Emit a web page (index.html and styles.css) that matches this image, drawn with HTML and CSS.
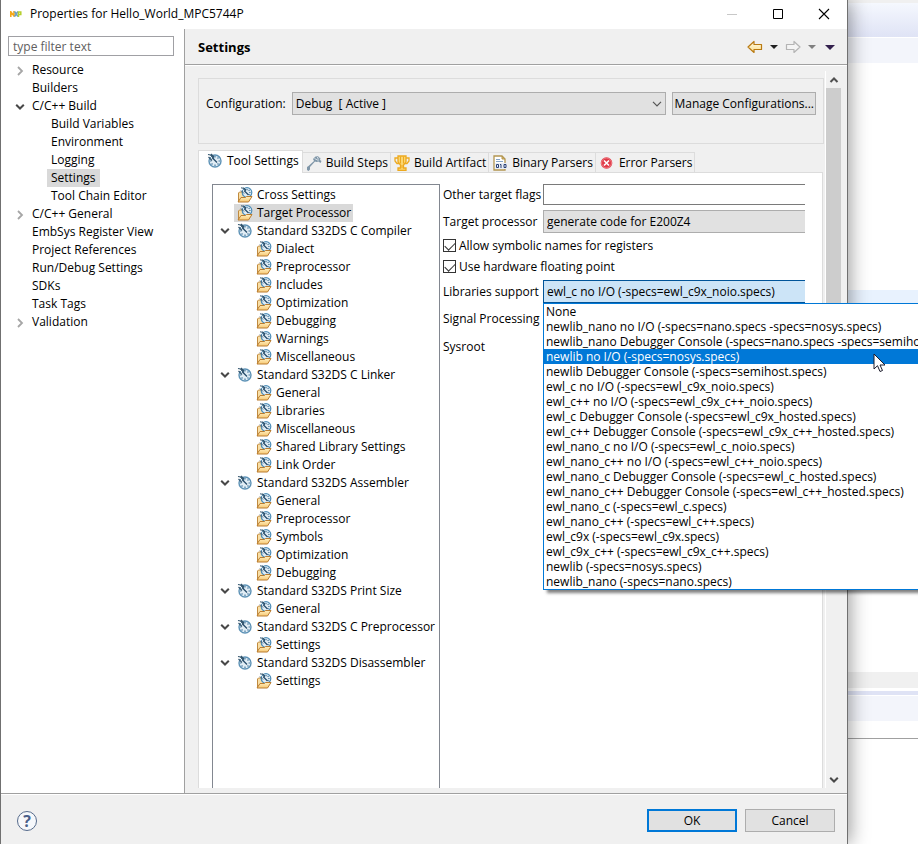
FILE: index.html
```html
<!DOCTYPE html>
<html lang="en">
<head>
<meta charset="utf-8">
<title>Properties for Hello_World_MPC5744P</title>
<link rel="stylesheet" href="styles.css">
</head>
<body>
<svg class="defs" aria-hidden="true">
  <defs>
    <linearGradient id="folder-fill" x1="0" y1="0" x2="0" y2="1">
      <stop offset="0" stop-color="#fff0c0"/><stop offset="1" stop-color="#f8c873"/>
    </linearGradient>
    <linearGradient id="arrow-fill" x1="0" y1="0" x2="0" y2="1">
      <stop offset="0" stop-color="#fffbe6"/><stop offset="1" stop-color="#fbdf8c"/>
    </linearGradient>
    <symbol id="dial" viewBox="0 0 16 16">
      <circle cx="8" cy="8" r="6" fill="#e1edf5" stroke="#5d92b6" stroke-width="1.400"/>
      <path d="M8 3v1.500M8 11.500V13M3 8h1.500M11.500 8H13M4.500 11.500l1-1M11.500 11.500l-1-1M11.500 4.500l-1 1" stroke="#4b7da2" stroke-width="1.200"/>
      <path d="M1 1.500l2.500.5L7 5.500M1.500 4l3.500 3.500M4 1l3 3" fill="none" stroke="#34566f" stroke-width="1.100"/>
      <path d="M3 3l6.500 6.500" stroke="#fff" stroke-width="1"/>
      <path d="M5 4.500l5 5" stroke="#234a69" stroke-width="1.200"/>
    </symbol>
    <symbol id="folder" viewBox="0 0 16 16">
      <path d="M1.500 14.500V6l1-1h3l1 1.500h6v5z" fill="#f9dfa6" stroke="#c08a3e"/>
      <circle cx="10" cy="5.500" r="4.800" fill="#e1edf5" stroke="#4d8db8" stroke-width="1.200"/>
      <path d="M10 2v1.200M13.500 5.500h-1.200M12.500 3l-.8.800M12.500 8l-.8-.8" stroke="#34688f" stroke-width="1.100"/>
      <path d="M4 .8l2 .4L9 4M4 3.500L7 6.500M6.500.5L9 3" fill="none" stroke="#34566f"/>
      <path d="M5.500 2.500l6 6" stroke="#fff" stroke-width=".9"/>
      <path d="M7 3.500l4.500 4.500" stroke="#234a69" stroke-width="1.200"/>
      <path d="M1 15l3-4.500h4.500l1-1H15L11.500 15z" fill="url(#folder-fill)" stroke="#b97c30" stroke-linejoin="round"/>
    </symbol>
    <symbol id="down" viewBox="0 0 10 8">
      <path d="M1.200 1.700L5 5.500l3.800-3.800" fill="none" stroke="#484848" stroke-width="2"/>
    </symbol>
    <symbol id="right" viewBox="0 0 10 10">
      <path d="M3 1l4 4-4 4" fill="none" stroke="#a6a6a6" stroke-width="1.800"/>
    </symbol>
    <symbol id="triangle" viewBox="0 0 8 4"><path d="M0 0h8L4 4z" fill="currentColor"/></symbol>
  </defs>
</svg>

<div class="desktop">
  <main class="dialog">
    <header class="titlebar">
      <svg class="brand" viewBox="0 0 12 6" aria-hidden="true">
        <path d="M.8 6V.8L4 5V0" fill="none" stroke="#f6a91b" stroke-width="1.600"/>
        <path d="M4.500.5l3.500 5M8 .5l-3.500 5" stroke="#6c9fc4" stroke-width="1.600"/>
        <path d="M8.500 6V1h2.300v2.400H8.800" fill="none" stroke="#b6cf2e" stroke-width="1.500"/>
      </svg>
      <h1>Properties for Hello_World_MPC5744P</h1>
      <div class="window-buttons">
        <button aria-label="Minimize"><svg viewBox="0 0 12 12"><path d="M1 6.500h10" stroke="#c8c8c8"/></svg></button>
        <button aria-label="Maximize"><svg viewBox="0 0 12 12"><path d="M1.500 1.500h9v9h-9z" fill="none" stroke="#000"/></svg></button>
        <button aria-label="Close"><svg viewBox="0 0 12 12"><path d="M1 1l10 10M11 1L1 11" stroke="#000" stroke-width="1.100"/></svg></button>
      </div>
    </header>

    <div class="panes">
      <nav class="sidebar" aria-label="Property pages">
        <input class="filter" type="text" placeholder="type filter text" aria-label="Filter">
        <ul class="nav-tree">
          <li><svg class="twist"><use href="#right"/></svg><span>Resource</span></li>
          <li><span>Builders</span></li>
          <li><svg class="twist open"><use href="#down"/></svg><span>C/C++ Build</span></li>
          <li class="child"><span>Build Variables</span></li>
          <li class="child"><span>Environment</span></li>
          <li class="child"><span>Logging</span></li>
          <li class="child"><span class="selected">Settings</span></li>
          <li class="child"><span>Tool Chain Editor</span></li>
          <li><svg class="twist"><use href="#right"/></svg><span>C/C++ General</span></li>
          <li><span>EmbSys Register View</span></li>
          <li><span>Project References</span></li>
          <li><span>Run/Debug Settings</span></li>
          <li><span>SDKs</span></li>
          <li><span>Task Tags</span></li>
          <li><svg class="twist"><use href="#right"/></svg><span>Validation</span></li>
        </ul>
      </nav>

      <section class="page">
        <header class="page-head">
          <h2>Settings</h2>
          <div class="history">
            <button aria-label="Back"><svg class="arrow" viewBox="0 0 16 14"><path d="M1 7l6-5.500V4.500h7.500v5H7v3z" fill="url(#arrow-fill)" stroke="#b97a12" stroke-width="1.200" stroke-linejoin="round"/></svg></button>
            <button aria-label="Back history"><svg class="tri"><use href="#triangle"/></svg></button>
            <button aria-label="Forward"><svg class="arrow" viewBox="0 0 16 14"><path d="M15 7L9 1.500V4.500H1.500v5H9v3z" fill="#f4f4f4" stroke="#b4b4b4" stroke-width="1.200" stroke-linejoin="round"/></svg></button>
            <button aria-label="Forward history"><svg class="tri dim"><use href="#triangle"/></svg></button>
            <button aria-label="Menu"><svg class="tri menu"><use href="#triangle"/></svg></button>
          </div>
        </header>

        <div class="scroll-area">
          <div class="content">
            <div class="config">
              <label for="config">Configuration:</label>
              <div class="combo">
                <select id="config"><option>Debug&nbsp; [ Active ]</option></select>
                <svg viewBox="0 0 10 6" aria-hidden="true"><path d="M1 .8l4 4 4-4" fill="none" stroke="#555" stroke-width="1.200"/></svg>
              </div>
              <button class="btn">Manage Configurations...</button>
            </div>

            <div class="tabs" role="tablist">
              <button class="tab active" role="tab" aria-selected="true"><svg><use href="#dial"/></svg>Tool Settings</button>
              <button class="tab" role="tab"><svg viewBox="0 0 16 16"><path d="M1 12l1.500-1L8 6 7 4l2.500-2.500L12 1l1 1.500 1.500.5-.5 2 1.500 1-1 2-2-1.500-2 .5-1.500-.5L4 12v2.500L2.500 16 1 15z" fill="#7f96a8"/><path d="M8.500 3.500l4 2M11 1.500l1.500 3" stroke="#d3dce3"/></svg>Build Steps</button>
              <button class="tab" role="tab"><svg viewBox="0 0 16 16"><path d="M4 3H1v3l2 2.500h2M12 3h3v3l-2 2.500h-2" fill="none" stroke="#eda91f" stroke-width="1.300"/><path d="M4 1h8v6l-2.500 3v3H12v2.300H4V13h2.500v-3L4 7z" fill="#fbd671" stroke="#eda91f" stroke-width="1.300"/><path d="M6.500 1.500v7M9.500 1.500v7M8 10v3" stroke="#eda91f"/></svg>Build Artifact</button>
              <button class="tab" role="tab"><svg viewBox="0 0 16 16"><path d="M2 1h8l3 3v11H2z" fill="#fff" stroke="#b29550" stroke-width="1.300"/><path d="M10 1v3h3z" fill="#d8b45b" stroke="#b29550"/><path d="M4 4.500h4M4 6.500h7" stroke="#86a5c6"/><path d="M3 8h12v6H3z" fill="#e9eef6"/><path d="M4.500 9.500h2v3h-2zM8 9.500h1v3.500M12 9.500h2v3h-2z" fill="none" stroke="#283f73"/></svg>Binary Parsers</button>
              <button class="tab" role="tab"><svg viewBox="0 0 16 16"><circle cx="7.500" cy="8" r="5.800" fill="#e03a48"/><circle cx="7.500" cy="8" r="5" fill="none" stroke="#f08a90" stroke-width=".8"/><path d="M5 5.500l5 5M10 5.500l-5 5" stroke="#fff" stroke-width="1.600"/></svg>Error Parsers</button>
            </div>

            <div class="tab-panel" role="tabpanel">
              <ul class="tool-tree">
                <li><svg><use href="#folder"/></svg>Cross Settings</li>
                <li><span class="selected"><svg><use href="#folder"/></svg>Target Processor</span></li>
                <li><svg class="twist"><use href="#down"/></svg><svg><use href="#dial"/></svg>Standard S32DS C Compiler</li>
                <li class="child"><svg><use href="#folder"/></svg>Dialect</li>
                <li class="child"><svg><use href="#folder"/></svg>Preprocessor</li>
                <li class="child"><svg><use href="#folder"/></svg>Includes</li>
                <li class="child"><svg><use href="#folder"/></svg>Optimization</li>
                <li class="child"><svg><use href="#folder"/></svg>Debugging</li>
                <li class="child"><svg><use href="#folder"/></svg>Warnings</li>
                <li class="child"><svg><use href="#folder"/></svg>Miscellaneous</li>
                <li><svg class="twist"><use href="#down"/></svg><svg><use href="#dial"/></svg>Standard S32DS C Linker</li>
                <li class="child"><svg><use href="#folder"/></svg>General</li>
                <li class="child"><svg><use href="#folder"/></svg>Libraries</li>
                <li class="child"><svg><use href="#folder"/></svg>Miscellaneous</li>
                <li class="child"><svg><use href="#folder"/></svg>Shared Library Settings</li>
                <li class="child"><svg><use href="#folder"/></svg>Link Order</li>
                <li><svg class="twist"><use href="#down"/></svg><svg><use href="#dial"/></svg>Standard S32DS Assembler</li>
                <li class="child"><svg><use href="#folder"/></svg>General</li>
                <li class="child"><svg><use href="#folder"/></svg>Preprocessor</li>
                <li class="child"><svg><use href="#folder"/></svg>Symbols</li>
                <li class="child"><svg><use href="#folder"/></svg>Optimization</li>
                <li class="child"><svg><use href="#folder"/></svg>Debugging</li>
                <li><svg class="twist"><use href="#down"/></svg><svg><use href="#dial"/></svg>Standard S32DS Print Size</li>
                <li class="child"><svg><use href="#folder"/></svg>General</li>
                <li><svg class="twist"><use href="#down"/></svg><svg><use href="#dial"/></svg>Standard S32DS C Preprocessor</li>
                <li class="child"><svg><use href="#folder"/></svg>Settings</li>
                <li><svg class="twist"><use href="#down"/></svg><svg><use href="#dial"/></svg>Standard S32DS Disassembler</li>
                <li class="child"><svg><use href="#folder"/></svg>Settings</li>
              </ul>

              <form class="options">
                <label for="flags">Other target flags</label>
                <input id="flags" class="field" type="text">
                <label for="cpu">Target processor</label>
                <select id="cpu" class="field"><option>generate code for E200Z4</option></select>
                <label class="check"><input type="checkbox" checked>Allow symbolic names for registers</label>
                <label class="check"><input type="checkbox" checked>Use hardware floating point</label>
                <label for="libs">Libraries support</label>
                <div class="dropdown">
                  <select id="libs" class="field focused"><option>ewl_c no I/O (-specs=ewl_c9x_noio.specs)</option></select>
                  <ul class="popup" role="listbox" aria-label="Libraries support">
                    <li role="option">None</li>
                    <li role="option">newlib_nano no I/O (-specs=nano.specs -specs=nosys.specs)</li>
                    <li role="option">newlib_nano Debugger Console (-specs=nano.specs -specs=semihost.specs)</li>
                    <li role="option" aria-selected="true" class="hover">newlib no I/O (-specs=nosys.specs)
                      <svg class="pointer" viewBox="0 0 13 20" aria-hidden="true"><path d="M1 1v15l3.500-3.300L7 18.500l2.500-1L7 12h5z" fill="#fff" stroke="#1c1c2c"/></svg></li>
                    <li role="option">newlib Debugger Console (-specs=semihost.specs)</li>
                    <li role="option">ewl_c no I/O (-specs=ewl_c9x_noio.specs)</li>
                    <li role="option">ewl_c++ no I/O (-specs=ewl_c9x_c++_noio.specs)</li>
                    <li role="option">ewl_c Debugger Console (-specs=ewl_c9x_hosted.specs)</li>
                    <li role="option">ewl_c++ Debugger Console (-specs=ewl_c9x_c++_hosted.specs)</li>
                    <li role="option">ewl_nano_c no I/O (-specs=ewl_c_noio.specs)</li>
                    <li role="option">ewl_nano_c++ no I/O (-specs=ewl_c++_noio.specs)</li>
                    <li role="option">ewl_nano_c Debugger Console (-specs=ewl_c_hosted.specs)</li>
                    <li role="option">ewl_nano_c++ Debugger Console (-specs=ewl_c++_hosted.specs)</li>
                    <li role="option">ewl_nano_c (-specs=ewl_c.specs)</li>
                    <li role="option">ewl_nano_c++ (-specs=ewl_c++.specs)</li>
                    <li role="option">ewl_c9x (-specs=ewl_c9x.specs)</li>
                    <li role="option">ewl_c9x_c++ (-specs=ewl_c9x_c++.specs)</li>
                    <li role="option">newlib (-specs=nosys.specs)</li>
                    <li role="option">newlib_nano (-specs=nano.specs)</li>
                  </ul>
                </div>
                <span>Signal Processing</span><span></span>
                <span>Sysroot</span><span></span>
              </form>
            </div>
          </div>

          <div class="scrollbar" aria-hidden="true">
            <svg viewBox="0 0 10 8"><path d="M1.500 6L5 2.500 8.500 6" fill="none" stroke="#505050" stroke-width="2"/></svg>
            <div class="track"><div class="thumb"></div></div>
            <svg><use href="#down"/></svg>
          </div>
        </div>
      </section>
    </div>

    <footer class="actions">
      <button class="help" aria-label="Help">?</button>
      <button class="btn primary">OK</button>
      <button class="btn">Cancel</button>
    </footer>
  </main>

  <aside class="backdrop" aria-hidden="true">
    <div class="bar"></div>
    <div class="strip"></div>
    <div class="editor"><div class="line"></div></div>
    <div class="sash"></div>
    <div class="bar slim"></div>
    <div class="strip"></div>
    <div class="view"></div>
  </aside>
</div>
</body>
</html>
```
FILE: styles.css
```css
* { box-sizing: border-box; }

body {
  margin: 0;
  background: #fff;
  color: #000;
  font: 12px/18px "Open Sans", "Noto Sans", sans-serif;
}

button, input, select { font: inherit; color: inherit; }
button { padding: 0; border: 0; background: none; }
ul { margin: 0; padding: 0; list-style: none; }
svg { display: block; flex: none; }
.defs { position: absolute; width: 0; height: 0; }

.desktop { display: flex; min-height: 100vh; overflow: hidden; }

/* Dialog frame */
.dialog {
  position: relative;
  z-index: 1;
  flex: 1;
  min-width: 0;
  display: flex;
  flex-direction: column;
  border: solid #707070;
  border-width: 0 1px;
  background: #f0f0f0;
  box-shadow: 2px 0 18px rgba(0, 0, 0, .4);
}

.titlebar {
  display: flex;
  align-items: center;
  height: 29px;
  padding: 0 17px 2px 9px;
  background: #fff;
}
.titlebar h1 { flex: 1; margin: 0; font-size: 12px; font-weight: 400; }
.brand { width: 12px; height: 6px; margin-right: 8px; }
.window-buttons { display: flex; gap: 34px; }
.window-buttons svg { width: 12px; height: 12px; }

.panes { flex: 1; display: flex; border-bottom: 1px solid #a0a0a0; }

/* Page navigation */
.sidebar {
  width: 184px;
  padding: 7px 10px 0 7px;
  border-right: 1px solid #a0a0a0;
  background: #fff;
}
.filter {
  display: block;
  width: 100%;
  height: 20px;
  margin-bottom: 5px;
  padding: 0 4px;
  border: 1px solid #a0a0a4;
}
.filter::placeholder { color: #606060; opacity: 1; }
.nav-tree li {
  display: flex;
  align-items: center;
  height: 18px;
  padding-left: 24px;
  white-space: nowrap;
}
.nav-tree .child { padding-left: 39px; }
.nav-tree .child span { padding: 0 4px; }
.nav-tree .twist { width: 10px; height: 10px; margin: 2px 7px 0 -17px; }
.nav-tree .open { height: 8px; }
.selected { background: #d9d9d9; }

/* Page heading */
.page { flex: 1; min-width: 0; display: flex; flex-direction: column; }
.page-head {
  display: flex;
  align-items: center;
  justify-content: space-between;
  height: 36px;
  padding: 1px 12px 0 13px;
  border-bottom: 1px solid #a0a0a0;
  box-shadow: 0 1px #fff;
}
.page-head h2 { margin: 0; font-size: 13px; }
.history { display: flex; align-items: center; gap: 7px; }
.arrow { width: 16px; height: 14px; }
.tri { width: 8px; height: 4px; color: #202020; }
.tri.dim { color: #808080; }
.tri.menu { width: 10px; height: 5px; margin-left: 2px; color: #33204d; }

.scroll-area { flex: 1; display: flex; padding: 6px 6px 5px 13px; }
.content { flex: 1; min-width: 0; display: flex; flex-direction: column; padding-top: 7px; }

.scrollbar {
  display: flex;
  flex-direction: column;
  align-items: center;
  width: 16px;
  margin-left: 1px;
  padding: 5px 0 4px;
  border-left: 1px solid #fff;
}
.scrollbar svg { width: 10px; height: 8px; }
.track { flex: 1; align-self: stretch; margin: 4px 0; }
.thumb { height: 66%; background: #cdcdcd; }

/* Configuration row */
.config {
  display: flex;
  align-items: flex-start;
  gap: 6px;
  height: 66px;
  margin-bottom: 6px;
  padding: 13px 7px 0;
  border: 1px solid #dcdcdc;
}
.config label { margin-top: 3px; }
.config .btn { padding: 0 1px; }
.combo { position: relative; flex: 1; }
select { appearance: none; border-radius: 0; }
.combo select {
  display: block;
  width: 100%;
  height: 23px;
  padding: 0 3px;
  border: 1px solid #adadad;
  background: #e1e1e1;
}
.combo svg { position: absolute; top: 9px; right: 4px; width: 10px; height: 6px; }

.btn {
  min-width: 90px;
  height: 23px;
  padding: 0 4px;
  border: 1px solid #adadad;
  background: #e1e1e1;
  white-space: nowrap;
}

/* Tabs */
.tabs { display: flex; align-items: flex-end; height: 22px; }
.tab {
  display: flex;
  align-items: center;
  gap: 4px;
  height: 20px;
  padding: 0 2px 0 3px;
  border: solid #dcdcdc;
  border-width: 1px 1px 0 0;
  white-space: nowrap;
}
.tab svg { width: 16px; height: 16px; }
.tab.active {
  position: relative;
  height: 23px;
  margin-bottom: -1px;
  padding: 0 3px 2px 8px;
  border-left-width: 1px;
  background: #fff;
}

.tab-panel {
  flex: 1;
  display: flex;
  margin-right: 1px;
  padding: 11px 17px 0 13px;
  border: solid #dcdcdc;
  border-width: 1px 1px 0;
  background: #fff;
}

.tool-tree {
  width: 228px;
  padding-top: 1px;
  border: solid #828790;
  border-width: 1px 1px 0;
}
.tool-tree li {
  display: flex;
  align-items: center;
  height: 18px;
  padding-left: 24px;
  white-space: nowrap;
}
.tool-tree .child { padding-left: 43px; }
.tool-tree svg { width: 16px; height: 16px; margin-right: 4px; }
.tool-tree .twist { width: 10px; height: 8px; margin: 0 7px 0 -17px; }
.tool-tree .selected { display: flex; align-items: center; margin-left: -3px; padding: 0 2px 0 3px; }

/* Tool options */
.options {
  flex: 1;
  min-width: 0;
  display: grid;
  grid-template-columns: 100px minmax(0, 1fr);
  grid-template-rows: 21px 33px 15px 27px 23px 32px 23px;
  align-items: center;
  align-content: start;
  padding-left: 3px;
  white-space: nowrap;
}
.field {
  display: block;
  width: 100%;
  height: 23px;
  padding: 0 3px;
  border: 1px solid #adadad;
  border-right: 0;
  background: #e1e1e1;
}
input.field { height: 21px; border-color: #7a7a7a; background: #fff; }
.focused { border-color: #005499; background: #cce4f7; outline: 0; }
.check { grid-column: 1 / -1; display: flex; align-items: center; gap: 3px; }
.check input {
  appearance: none;
  width: 13px;
  height: 13px;
  margin: 0;
  border: 1px solid #333;
  background: #fff;
  display: grid;
  place-items: center;
}
.check input:checked::before {
  content: "";
  width: 9px;
  height: 5px;
  margin-top: -2px;
  border: solid #333;
  border-width: 0 0 1px 1px;
  transform: rotate(-45deg);
}

.dropdown { position: relative; }
.popup {
  position: absolute;
  z-index: 5;
  top: 100%;
  left: 0;
  width: 375px;
  border: 1px solid #0078d7;
  border-right: 0;
  background: #fff;
  box-shadow: 4px 3px 3px rgba(0, 0, 0, .5);
  line-height: 15px;
  white-space: nowrap;
}
.popup li { position: relative; height: 15px; padding-left: 2px; }
.popup .hover { background: #0078d7; color: #fff; }
.pointer { position: absolute; z-index: 1; left: 329px; top: 4px; width: 13px; height: 20px; }

/* Footer */
.actions {
  display: flex;
  align-items: center;
  gap: 8px;
  height: 50px;
  padding: 2px 12px 0 16px;
  border-top: 1px solid #fff;
}
.help {
  width: 20px;
  height: 20px;
  margin-right: auto;
  border: 1px solid #566b8c;
  border-radius: 50%;
  background: #f6f8fb;
  color: #4a5f8a;
  font-size: 16px;
  font-weight: 700;
  line-height: 18px;
}
.primary { border: 2px solid #0078d7; }

/* Workbench behind the dialog */
.backdrop { display: flex; flex-direction: column; width: 70px; }
.bar {
  height: 37px;
  border-top: 3px solid #f0f0f0;
  background: linear-gradient(#f5f8fe, #dfe3f5);
}
.slim { height: 4px; border: 0; background: #dfe3f5; }
.strip { height: 26px; border-top: 1px solid #fff; background: #f3f5fb; }
.editor { flex: 1; padding-top: 227px; }
.line { height: 15px; background: #e8f2fe; }
.sash { height: 19px; border-bottom: 3px solid #fff; background: #f0f0f0; }
.view { height: 123px; border-top: 17px solid #fff; box-shadow: inset 0 1px #a0a0a0; }
```
